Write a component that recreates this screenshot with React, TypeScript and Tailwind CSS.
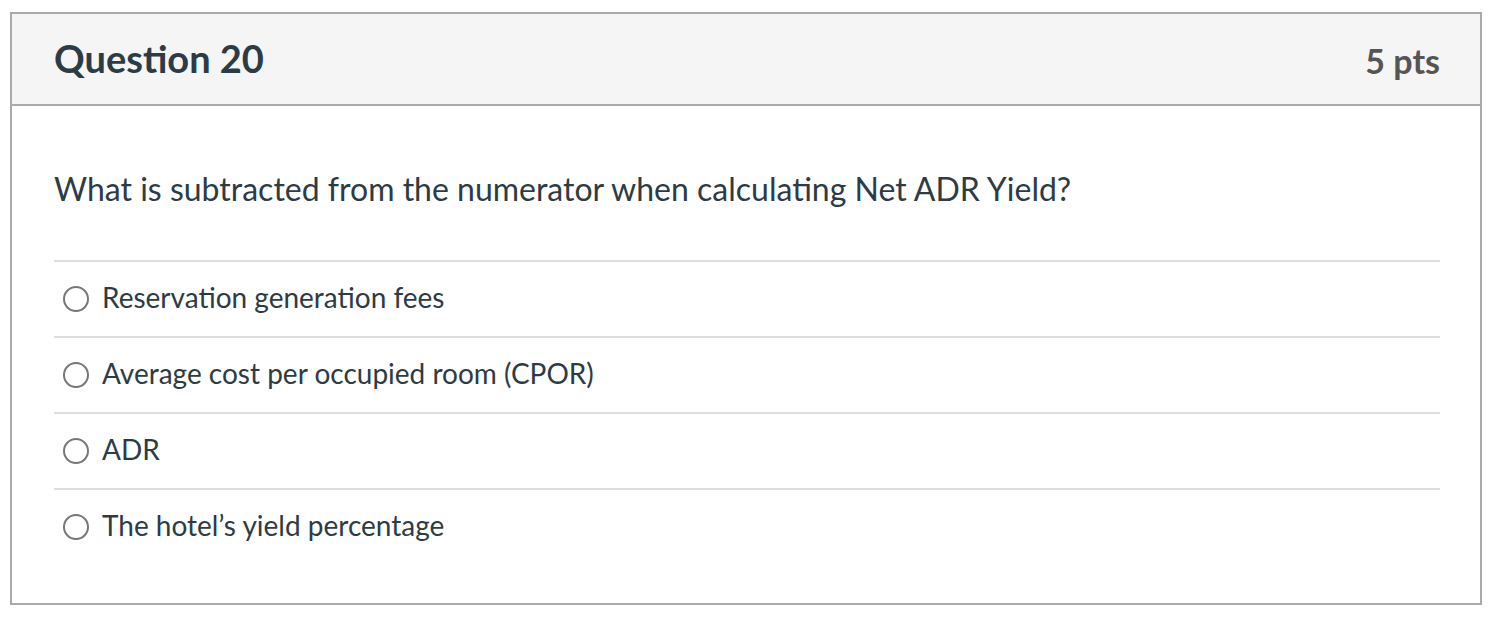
const answers = [
  "Reservation generation fees",
  "Average cost per occupied room (CPOR)",
  "ADR",
  "The hotel\u2019s yield percentage",
];

export default function App() {
  return (
    <div className="min-h-[632px] bg-white pl-[10px] pt-[12px] font-['Lato',sans-serif] text-[#2d3b45]">
      <div className="w-[1472px] h-[593px] border-2 border-[#aaaaaa]">
        <div className="flex h-[92px] items-center justify-between border-b-2 border-[#aaaaaa] bg-[#f5f5f5] pl-[42px] pr-[40px]">
          <h2 className="pb-[2px] text-[38px] font-bold leading-none">Question 20</h2>
          <div className="pt-[3px] text-[34px] font-bold leading-none text-[#555555]">5 pts</div>
        </div>
        <div className="pl-[42px] pr-[40px]">
          <p className="pt-[64px] pb-[52px] text-[32px] leading-[38px]">
            What is subtracted from the numerator when calculating Net ADR Yield?
          </p>
          <div>
            {answers.map((a) => (
              <label
                key={a}
                className="flex h-[76px] items-center border-t-2 border-[#dddddd] pl-[9px]"
              >
                <span className="mr-[13px] h-[26px] w-[26px] rounded-full border-2 border-[#777777] bg-white" />
                <span className="pb-[5px] text-[28px] leading-none">{a}</span>
              </label>
            ))}
          </div>
        </div>
      </div>
    </div>
  );
}
